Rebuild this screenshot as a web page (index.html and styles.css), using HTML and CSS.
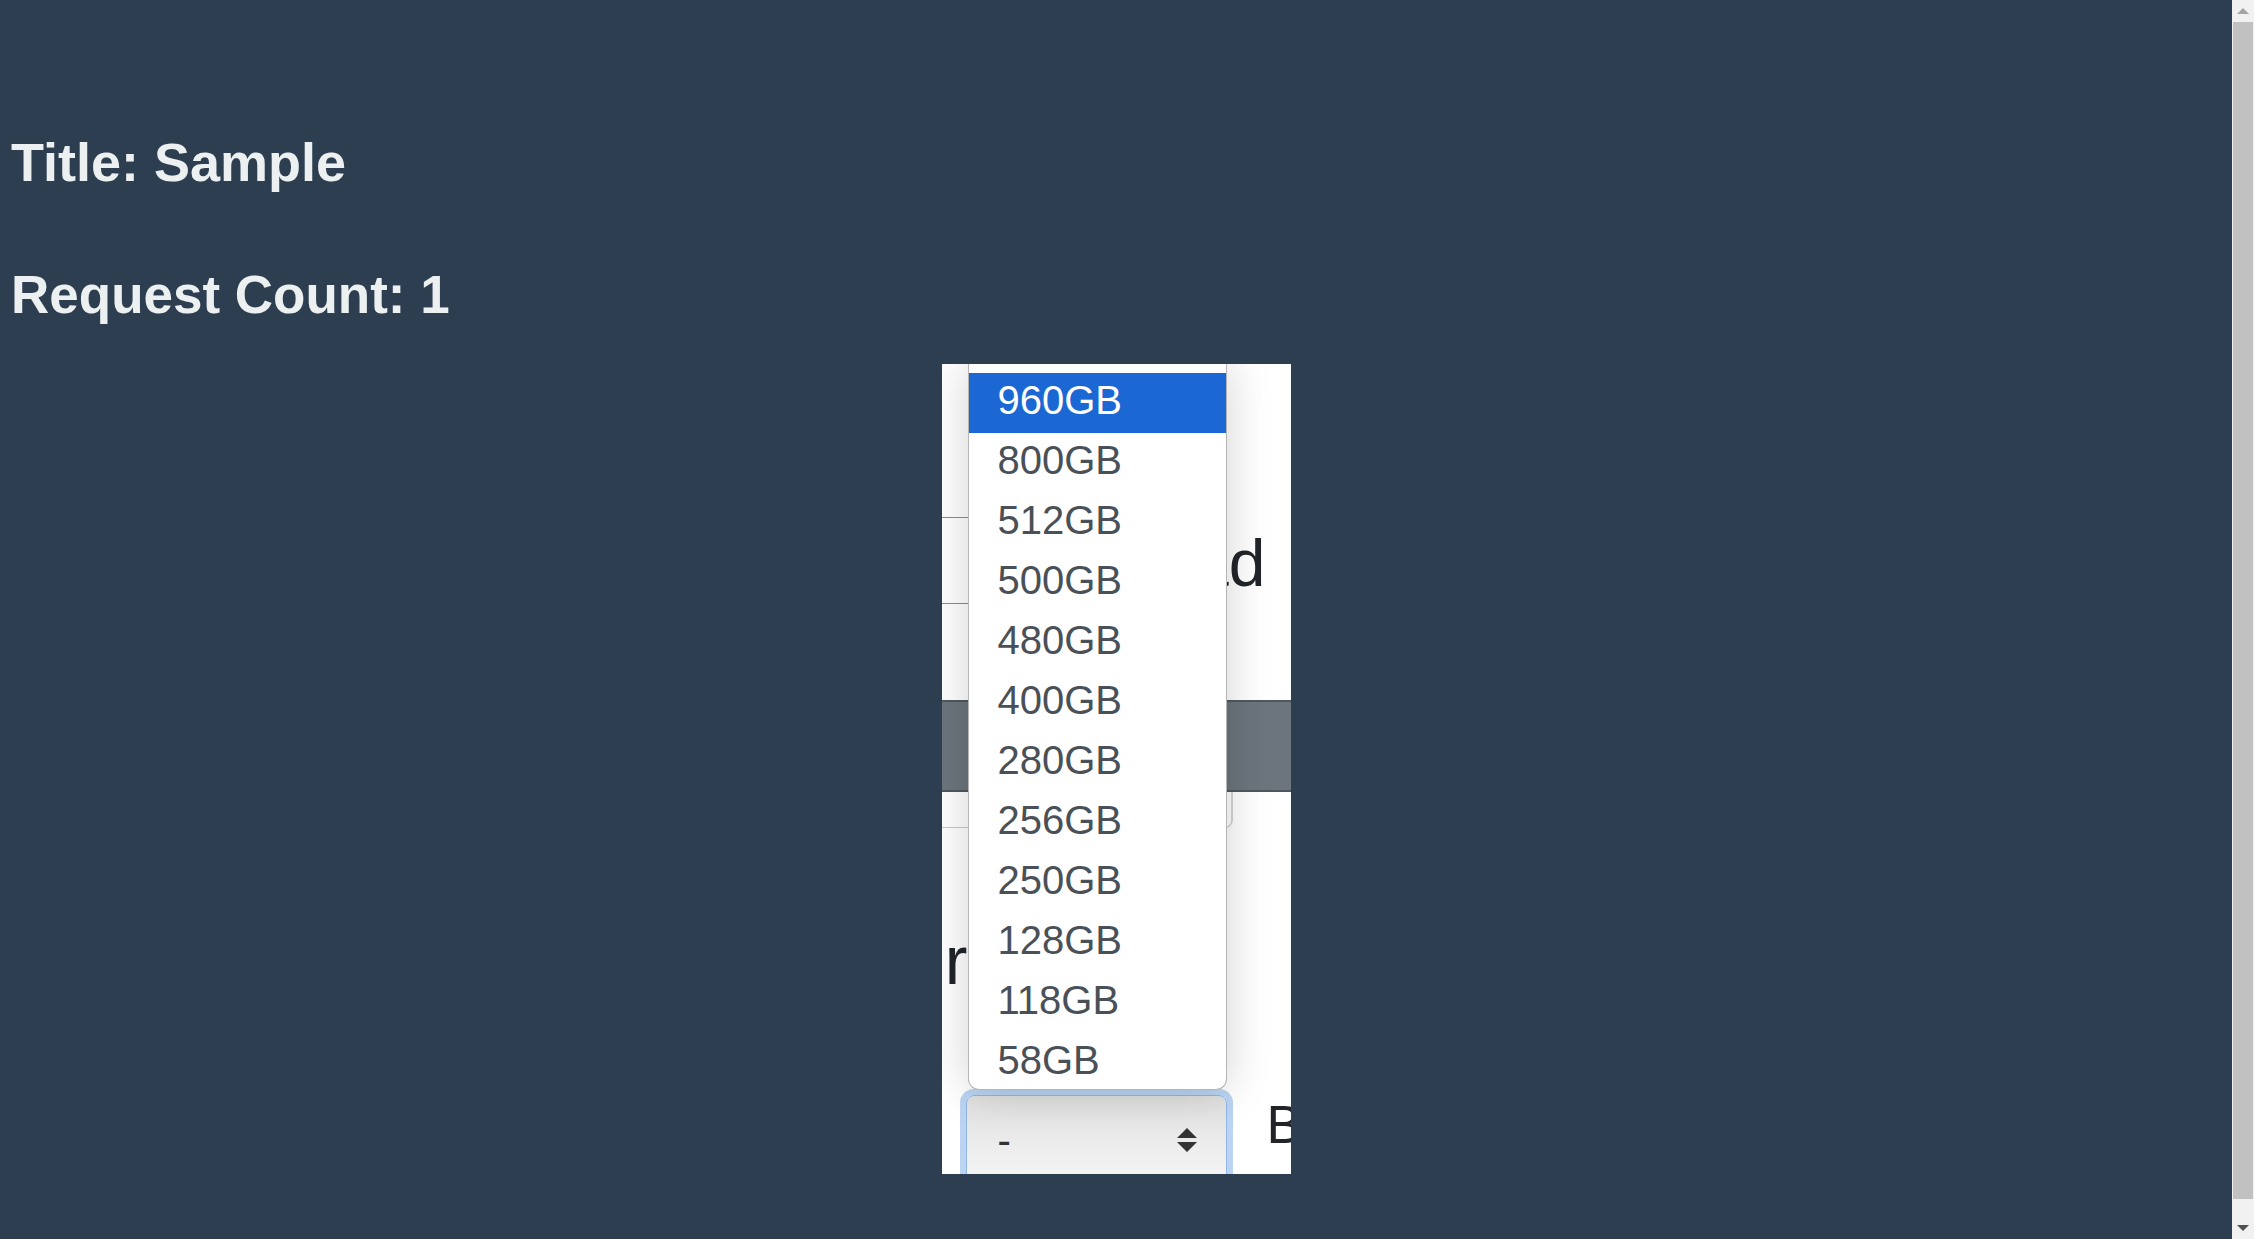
FILE: index.html
```html
<!DOCTYPE html>
<html lang="en">
<head>
<meta charset="utf-8">
<title>Sample</title>
<link rel="stylesheet" href="styles.css">
</head>
<body>
<div class="page">
  <main class="main">
    <h2 class="heading title">Title: Sample</h2>
    <h2 class="heading count">Request Count: 1</h2>
    <div class="panel">
      <div class="spacer-top"></div>
      <div class="row-load">
        <div class="cell-left"></div>
        <div class="load-text">Load</div>
      </div>
      <div class="spacer-mid"></div>
      <div class="band"></div>
      <div class="boxline"></div>
      <div class="r-row"><span class="r-text">Number</span></div>
      <div class="select-row">
        <div class="select">
          <span class="sel-val">-</span>
          <svg class="sel-arrows" width="20" height="24" viewBox="0 0 20 24"><path d="M10 0 L20 10 L0 10 Z M0 14 L20 14 L10 24 Z" fill="#333"/></svg>
        </div>
        <span class="unit">B</span>
      </div>
      <ul class="dropdown">
        <li class="opt selected">960GB</li>
        <li class="opt">800GB</li>
        <li class="opt">512GB</li>
        <li class="opt">500GB</li>
        <li class="opt">480GB</li>
        <li class="opt">400GB</li>
        <li class="opt">280GB</li>
        <li class="opt">256GB</li>
        <li class="opt">250GB</li>
        <li class="opt">128GB</li>
        <li class="opt">118GB</li>
        <li class="opt">58GB</li>
      </ul>
    </div>
  </main>
  <div class="scrollbar">
    <div class="sb-btn"><span class="tri-up"></span></div>
    <div class="sb-track"><div class="sb-thumb"></div></div>
    <div class="sb-btn"><span class="tri-down"></span></div>
  </div>
</div>
</body>
</html>
```
FILE: styles.css
```css
html, body {
  margin: 0;
  height: 100%;
}
body {
  background: #2c3e50;
  overflow: hidden;
  font-family: "Liberation Sans", Arial, sans-serif;
}
.page {
  display: flex;
  height: 1239px;
}
.main {
  flex: 1;
  min-width: 0;
  padding-top: 130px;
}
.heading {
  margin: 0;
  padding-left: 11px;
  font-size: 54px;
  line-height: 64px;
  font-weight: bold;
  color: #ecf0f1;
}
.count {
  margin-top: 69px;
  font-size: 53px;
}
.panel {
  position: relative;
  width: 349px;
  height: 810px;
  margin: 37px auto 0;
  background: #fff;
  overflow: hidden;
}
.spacer-top {
  height: 153px;
}
.row-load {
  display: flex;
  height: 87px;
}
.cell-left {
  width: 26px;
  border-top: 1px solid #8c8c8c;
  border-bottom: 1px solid #8c8c8c;
  box-sizing: border-box;
}
.load-text {
  flex: 1;
  text-align: right;
  padding: 6px 25px 0 0;
  font-size: 66px;
  line-height: 80px;
  color: #212529;
  white-space: nowrap;
}
.spacer-mid {
  height: 96px;
}
.band {
  height: 92px;
  box-sizing: border-box;
  background: #6c757d;
  border-top: 2px solid #50575e;
  border-bottom: 2px solid #50575e;
}
.boxline {
  width: 291px;
  height: 36px;
  box-sizing: border-box;
  border-right: 2px solid #d4d4d4;
  border-bottom: 1px solid #c8c8c8;
  border-bottom-right-radius: 8px;
}
.r-row {
  width: 26px;
  height: 267px;
  box-sizing: border-box;
  padding-top: 92px;
  display: flex;
  justify-content: flex-end;
  white-space: nowrap;
  font-size: 68px;
  line-height: 80px;
  color: #212529;
}
.select-row {
  display: flex;
  align-items: flex-start;
  padding-left: 24px;
}
.select {
  width: 261px;
  height: 90px;
  flex: none;
  box-sizing: border-box;
  display: flex;
  align-items: center;
  justify-content: space-between;
  padding: 0 29px 0 31px;
  border: 1px solid #8fb6e8;
  border-radius: 8px;
  box-shadow: 0 0 0 6px #bad4f2;
  background: linear-gradient(#e0e0e0, #f6f6f6);
  font-size: 40px;
  color: #333;
}
.sel-arrows {
  display: block;
}
.unit {
  margin-left: 40px;
  margin-top: -2px;
  font-size: 53px;
  line-height: 64px;
  color: #212529;
}
.dropdown {
  position: absolute;
  top: 0;
  left: 26px;
  width: 259px;
  height: 726px;
  box-sizing: border-box;
  margin: 0;
  padding: 9px 0 0;
  list-style: none;
  background: #fff;
  border: 1px solid #b5b5b5;
  border-top: none;
  border-radius: 0 0 11px 11px;
  box-shadow: 0 0 45px rgba(0, 0, 0, 0.18);
  overflow: hidden;
}
.opt {
  height: 60px;
  box-sizing: border-box;
  padding-left: 29px;
  font-size: 40px;
  line-height: 54px;
  color: #495057;
}
.opt.selected {
  background: #1b67d4;
  color: #fff;
}
.scrollbar {
  width: 22px;
  flex: none;
  background: #f1f1f1;
  display: flex;
  flex-direction: column;
}
.sb-btn {
  height: 22px;
  display: flex;
  align-items: center;
  justify-content: center;
}
.tri-up {
  width: 0;
  height: 0;
  border-left: 6px solid transparent;
  border-right: 6px solid transparent;
  border-bottom: 6px solid #a3a3a3;
}
.tri-down {
  width: 0;
  height: 0;
  border-left: 6px solid transparent;
  border-right: 6px solid transparent;
  border-top: 6px solid #505050;
}
.sb-track {
  flex: 1;
}
.sb-thumb {
  height: 1177px;
  margin: 0 1px;
  background: #c1c1c1;
}
```
